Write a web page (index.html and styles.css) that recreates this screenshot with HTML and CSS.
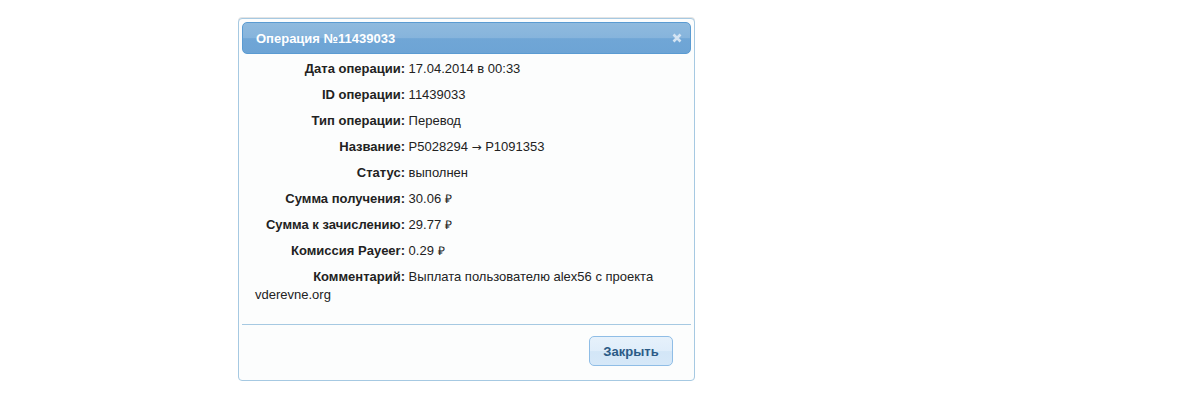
FILE: index.html
```html
<!DOCTYPE html>
<html lang="ru">
<head>
<meta charset="utf-8">
<title>Операция №11439033</title>
<link rel="stylesheet" href="styles.css">
</head>
<body>
<div class="dialog">
  <div class="titlebar">
    <span class="title">Операция №11439033</span>
    <span class="close" aria-label="close">
      <svg width="10" height="10" viewBox="0 0 10 10"><path d="M1.5 1.5 L8.5 8.5 M8.5 1.5 L1.5 8.5" stroke="#d4e4f3" stroke-width="2.6" stroke-linecap="butt"/></svg>
    </span>
  </div>
  <div class="content">
    <p class="row"><span class="label">Дата операции:</span> 17.04.2014 в 00:33</p>
    <p class="row"><span class="label">ID операции:</span> 11439033</p>
    <p class="row"><span class="label">Тип операции:</span> Перевод</p>
    <p class="row"><span class="label">Название:</span> P5028294 <span class="arrow">→</span> P1091353</p>
    <p class="row"><span class="label">Статус:</span> выполнен</p>
    <p class="row"><span class="label">Сумма получения:</span> 30.06 <span class="rub">₽</span></p>
    <p class="row"><span class="label">Сумма к зачислению:</span> 29.77 <span class="rub">₽</span></p>
    <p class="row"><span class="label">Комиссия Payeer:</span> 0.29 <span class="rub">₽</span></p>
    <p class="row"><span class="label">Комментарий:</span> Выплата пользователю alex56 с проекта vderevne.org</p>
  </div>
  <div class="buttonpane">
    <button class="btn" type="button">Закрыть</button>
  </div>
</div>
</body>
</html>
```
FILE: styles.css
```css
html, body {
  margin: 0;
  padding: 0;
  background: #ffffff;
}
body {
  padding: 18px 0 0 238px;
  font-family: "Liberation Sans", Arial, sans-serif;
  font-size: 13px;
  color: #222222;
}
.dialog {
  width: 449px;
  height: 355px;
  padding: 3px;
  border: 1px solid #a6c9e2;
  border-radius: 4px;
  background: #fcfdfd;
  display: flex;
  flex-direction: column;
  box-shadow: 0 -1px 0 #e4e4e4;
}
.titlebar {
  height: 30px;
  border: 1px solid #5a9bd2;
  border-radius: 5px;
  background: linear-gradient(to bottom, #8fbade 0%, #86b4dc 50%, #70a6d6 52%, #6da4d5 100%);
  display: flex;
  align-items: center;
  justify-content: space-between;
  padding: 0 8px 0 13px;
}
.title {
  color: #ffffff;
  font-weight: bold;
  font-size: 13px;
}
.close {
  display: flex;
  width: 10px;
  height: 10px;
}
.content {
  padding: 6px 13px 0 13px;
  flex: 1;
}
.row {
  margin: 0 0 8px 0;
  line-height: 18px;
  color: #222222;
}
.label {
  display: inline-block;
  width: 150px;
  text-align: right;
  font-weight: bold;
  color: #222222;
}
.arrow {
  font-family: "DejaVu Sans", sans-serif;
  font-size: 12px;
}
.rub {
  font-size: 12px;
}
.buttonpane {
  border-top: 1px solid #a6c9e2;
  padding: 11px 18px 11px 0;
  display: flex;
  justify-content: flex-end;
}
.btn {
  width: 84px;
  height: 30px;
  border: 1px solid #8fbde6;
  border-radius: 5px;
  background: linear-gradient(to bottom, #e6f1fb 0%, #dfedfa 50%, #d3e6f7 52%, #d6e8f8 100%);
  color: #2b5a86;
  font-family: "Liberation Sans", Arial, sans-serif;
  font-size: 13px;
  font-weight: bold;
  padding: 0;
  cursor: pointer;
}
```
